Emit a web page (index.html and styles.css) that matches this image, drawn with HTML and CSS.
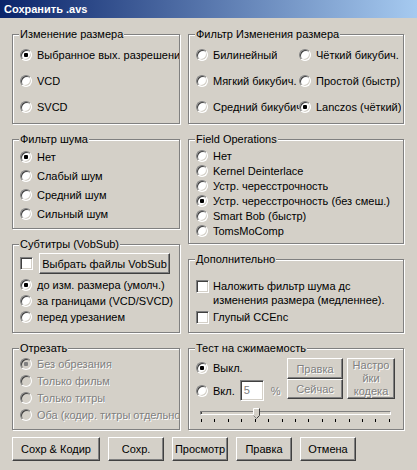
FILE: index.html
```html
<!DOCTYPE html>
<html>
<head>
  <meta charset="utf-8">
  <title>Сохранить .avs</title>
  <link rel="stylesheet" href="styles.css">
</head>
<body>
  <div class="window">
    <div class="titlebar">Сохранить .avs</div>

    <div class="client">
      <div class="columns">

        <div class="col col-left">
          <div class="group g-resize">
            <span class="legend">Изменение размера</span>
            <div class="opts">
              <div class="opt"><span class="radio on"></span><span class="txt">Выбранное вых. разрешение</span></div>
              <div class="opt"><span class="radio"></span><span class="txt">VCD</span></div>
              <div class="opt"><span class="radio"></span><span class="txt">SVCD</span></div>
            </div>
          </div>

          <div class="group g-noise">
            <span class="legend">Фильтр шума</span>
            <div class="opts">
              <div class="opt"><span class="radio on"></span><span class="txt">Нет</span></div>
              <div class="opt"><span class="radio"></span><span class="txt">Слабый шум</span></div>
              <div class="opt"><span class="radio"></span><span class="txt">Средний шум</span></div>
              <div class="opt"><span class="radio"></span><span class="txt">Сильный шум</span></div>
            </div>
          </div>

          <div class="group g-subs">
            <span class="legend">Субтитры (VobSub)</span>
            <div class="subs-row">
              <span class="check"></span>
              <button class="btn btn-vobsub">Выбрать файлы VobSub</button>
            </div>
            <div class="opts">
              <div class="opt"><span class="radio on"></span><span class="txt">до изм. размера (умолч.)</span></div>
              <div class="opt"><span class="radio"></span><span class="txt">за границами (VCD/SVCD)</span></div>
              <div class="opt"><span class="radio"></span><span class="txt">перед урезанием</span></div>
            </div>
          </div>

          <div class="group g-crop">
            <span class="legend">Отрезать</span>
            <div class="opts">
              <div class="opt off"><span class="radio on"></span><span class="txt">Без обрезания</span></div>
              <div class="opt off"><span class="radio"></span><span class="txt">Только фильм</span></div>
              <div class="opt off"><span class="radio"></span><span class="txt">Только титры</span></div>
              <div class="opt off"><span class="radio"></span><span class="txt">Оба (кодир. титры отдельно)</span></div>
            </div>
          </div>
        </div>

        <div class="col col-right">
          <div class="group g-filter">
            <span class="legend">Фильтр Изменения размера</span>
            <div class="opts grid2">
              <div class="opt"><span class="radio"></span><span class="txt">Билинейный</span></div>
              <div class="opt"><span class="radio"></span><span class="txt">Чёткий бикубич.</span></div>
              <div class="opt"><span class="radio"></span><span class="txt">Мягкий бикубич.</span></div>
              <div class="opt"><span class="radio"></span><span class="txt">Простой (быстр)</span></div>
              <div class="opt"><span class="radio"></span><span class="txt">Средний бикубич.</span></div>
              <div class="opt"><span class="radio on"></span><span class="txt">Lanczos (чёткий)</span></div>
            </div>
          </div>

          <div class="group g-field">
            <span class="legend">Field Operations</span>
            <div class="opts">
              <div class="opt"><span class="radio"></span><span class="txt">Нет</span></div>
              <div class="opt"><span class="radio"></span><span class="txt">Kernel Deinterlace</span></div>
              <div class="opt"><span class="radio"></span><span class="txt">Устр. чересстрочность</span></div>
              <div class="opt"><span class="radio on"></span><span class="txt">Устр. чересстрочность (без смеш.)</span></div>
              <div class="opt"><span class="radio"></span><span class="txt">Smart Bob (быстр)</span></div>
              <div class="opt"><span class="radio"></span><span class="txt">TomsMoComp</span></div>
            </div>
          </div>

          <div class="group g-extra">
            <span class="legend">Дополнительно</span>
            <div class="chk-row">
              <span class="check"></span>
              <span class="txt-wrap">Наложить фильтр шума дс<br>изменения размера (медленнее).</span>
            </div>
            <div class="chk-row chk-row2">
              <span class="check"></span>
              <span class="txt-wrap">Глупый CCEnc</span>
            </div>
          </div>

          <div class="group g-test">
            <span class="legend">Тест на сжимаемость</span>
            <div class="test-top">
              <div class="test-left">
                <div class="opt test-off"><span class="radio on"></span><span class="txt">Выкл.</span></div>
                <div class="opt test-on">
                  <span class="radio"></span><span class="txt">Вкл.</span>
                  <span class="edit">5</span>
                  <span class="pct">%</span>
                </div>
              </div>
              <div class="test-btns">
                <button class="btn btn-off btn-edit">Правка</button>
                <button class="btn btn-off btn-codec">Настро<br>йки<br>кодека</button>
                <button class="btn btn-off btn-now">Сейчас</button>
              </div>
            </div>
            <div class="slider">
              <div class="track"></div>
              <svg class="thumb" width="7" height="11" viewBox="0 0 7 11">
                <polygon points="0.5,0.5 6.5,0.5 6.5,7.5 3.5,10.5 0.5,7.5" fill="#d4d0c8"/>
                <polyline points="0.5,7.5 0.5,0.5 6.5,0.5" fill="none" stroke="#fff"/>
                <polyline points="6.5,0.5 6.5,7.5 3.5,10.5" fill="none" stroke="#404040"/>
                <polyline points="0.5,7.5 3.5,10.5" fill="none" stroke="#808080"/>
              </svg>
              <div class="ticks">
                <i></i><i></i><i></i><i></i><i></i><i></i><i></i><i></i>
                <i></i><i></i><i></i><i></i><i></i><i></i><i></i>
              </div>
            </div>
          </div>
        </div>

      </div>

      <div class="buttons">
        <button class="btn btn-main">Сохр &amp; Кодир</button>
        <button class="btn">Сохр.</button>
        <button class="btn">Просмотр</button>
        <button class="btn">Правка</button>
        <button class="btn">Отмена</button>
      </div>
    </div>
  </div>
</body>
</html>
```

FILE: styles.css
```css
body {
  margin: 0;
  background: #d4d0c8;
  font-family: "Liberation Sans", Arial, sans-serif;
  font-size: 11px;
  color: #000;
}

.window {
  width: 417px;
  height: 470px;
  background: #d4d0c8;
}

.titlebar {
  height: 18px;
  line-height: 18px;
  padding-left: 4px;
  color: #fff;
  font-weight: bold;
  background: linear-gradient(to right, #0a246a, #a6caf0);
}

.client {
  padding: 16px 0 0 12px;
}

.columns {
  display: flex;
  gap: 8px;
}

.col {
  display: flex;
  flex-direction: column;
  gap: 15px;
}

.col-left { width: 168px; }
.col-right { width: 216px; }

/* etched group box */
.group {
  box-sizing: border-box;
  border: 1px solid #808080;
  box-shadow: inset 1px 1px #fff, 1px 1px #fff;
  padding-left: 7px;
}

.legend {
  display: block;
  width: fit-content;
  margin: -7px 0 0 -1px;
  padding: 0 1px;
  line-height: 13px;
  background: #d4d0c8;
}

.opts {
  display: flex;
  flex-direction: column;
}

.opt {
  display: flex;
  align-items: center;
  height: 14px;
  min-width: 0;
}

.txt {
  white-space: nowrap;
  overflow: hidden;
  min-width: 0;
  line-height: 14px;
}

.opt.off .txt {
  color: #808080;
  text-shadow: 1px 1px #fff;
}

/* radio + checkbox */
.radio {
  flex: none;
  position: relative;
  box-sizing: border-box;
  width: 12px;
  height: 12px;
  margin-right: 5px;
  border-radius: 50%;
  border: 1px solid;
  border-color: #808080 #fff #fff #808080;
  box-shadow: inset 1px 1px #404040, inset -1px -1px #d4d0c8;
  background: #fff;
}

.radio.on::after {
  content: "";
  position: absolute;
  left: 3px;
  top: 3px;
  width: 4px;
  height: 4px;
  border-radius: 1px;
  background: #000;
}

.opt.off .radio { background: #d4d0c8; }
.opt.off .radio.on::after { background: #808080; }

.check {
  flex: none;
  box-sizing: border-box;
  width: 13px;
  height: 13px;
  border: 1px solid;
  border-color: #808080 #fff #fff #808080;
  box-shadow: inset 1px 1px #404040, inset -1px -1px #d4d0c8;
  background: #fff;
}

/* buttons */
.btn {
  box-sizing: border-box;
  padding: 0;
  font: inherit;
  color: #000;
  background: #d4d0c8;
  border: 1px solid;
  border-color: #fff #404040 #404040 #fff;
  box-shadow: inset -1px -1px #808080;
  white-space: nowrap;
}

.btn-off {
  color: #808080;
  text-shadow: 1px 1px #fff;
}

/* per-group spacing */
.g-resize { height: 90px; }
.g-resize .opts { margin-top: 7px; gap: 12px; }

.g-filter { height: 90px; }
.grid2 {
  display: grid;
  grid-template-columns: 103px 1fr;
  row-gap: 12px;
  margin-top: 7px;
}

.g-noise { height: 90px; }
.g-noise .opts { margin-top: 4px; gap: 5px; }

.g-field { height: 105px; }
.g-field .opts { margin-top: 3px; gap: 1px; }

.g-subs { height: 89px; }
.subs-row {
  display: flex;
  align-items: center;
  gap: 6px;
  margin-top: 2px;
}
.btn-vobsub { width: 131px; height: 21px; }
.g-subs .opts { margin-top: 4px; gap: 2px; }

.g-crop { height: 82px; }
.g-crop .opts { margin-top: 2px; gap: 3px; }

.g-extra { height: 74px; }
.chk-row {
  display: flex;
  align-items: flex-start;
  gap: 4px;
  margin-top: 13px;
}
.chk-row .check { margin-top: 1px; }
.chk-row2 { margin-top: 3px; }
.txt-wrap { line-height: 14px; white-space: nowrap; }

/* compression test */
.g-test { height: 82px; }
.test-top {
  display: flex;
  margin-top: 3px;
}
.test-left { width: 91px; }
.test-off { margin-top: 3px; }
.test-on { height: 21px; margin-top: 5px; }

.edit {
  box-sizing: border-box;
  width: 24px;
  height: 21px;
  margin-left: 5px;
  padding-left: 3px;
  line-height: 19px;
  border: 1px solid;
  border-color: #808080 #fff #fff #808080;
  box-shadow: inset 1px 1px #404040, inset -1px -1px #d4d0c8;
  background: #fff;
  color: #808080;
}

.pct {
  margin-left: 7px;
  color: #808080;
  text-shadow: 1px 1px #fff;
}

.test-btns {
  display: grid;
  grid-template-columns: 56px 48px;
  grid-template-rows: 21px 20px;
  column-gap: 4px;
}
.btn-edit { grid-column: 1; grid-row: 1; }
.btn-now { grid-column: 1; grid-row: 2; }
.btn-codec {
  grid-column: 2;
  grid-row: 1 / span 2;
  line-height: 13px;
}

.slider {
  position: relative;
  width: 191px;
  margin: 10px 0 0 4px;
}

.track {
  box-sizing: border-box;
  height: 4px;
  border: 1px solid;
  border-color: #808080 #fff #fff #808080;
  box-shadow: inset 1px 0 #404040;
  background: #d4d0c8;
}

.thumb {
  position: absolute;
  left: 53px;
  top: -3px;
}

.ticks {
  display: flex;
  justify-content: space-between;
  width: 189px;
  margin: 4px 0 0 1px;
}
.ticks i {
  width: 1px;
  height: 3px;
  background: #000;
}

/* bottom buttons */
.buttons {
  display: flex;
  gap: 8px;
  margin-top: 7px;
}
.buttons .btn { width: 56px; height: 24px; }
.buttons .btn-main { width: 88px; }
```
